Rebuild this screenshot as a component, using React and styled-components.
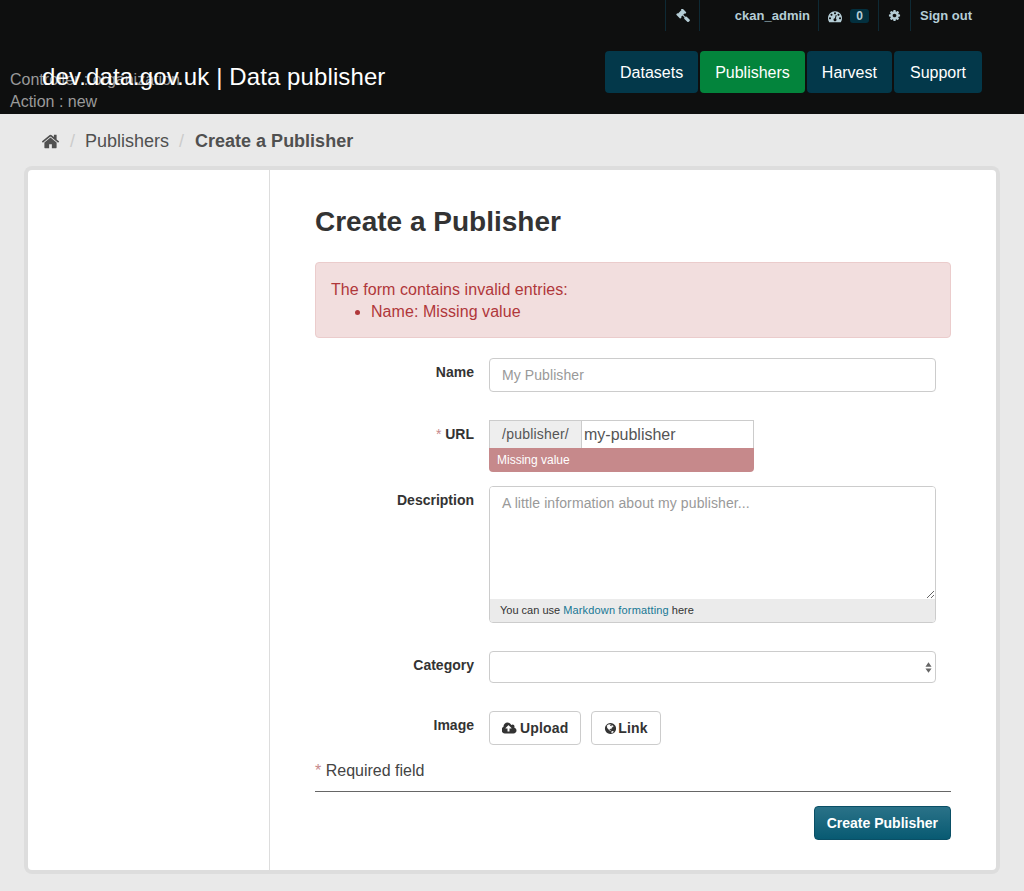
import styled, { createGlobalStyle } from "styled-components";

// Font Awesome 4 glyphs, the library's own icons differ from the old set
const icons = {
  gavel: {
    box: "0 0 1792 1792",
    d: "M1771 1440q0 53-37 90l-107 108q-39 37-91 37-53 0-90-37l-363-364q-38-36-38-90 0-53 43-96l-256-256-126 126q-14 14-34 14t-34-14q2 2 12.5 12t12.5 13 10 11.5 10 13.5 6 13.5 5.5 16.5 1.5 18q0 38-28 68-3 3-16.5 18t-19 20.5-18.5 16.5-22 15.5-22 9-26 4.5q-40 0-68-28l-408-408q-28-28-28-68 0-13 4.5-26t9-22 15.5-22 16.5-18.5 20.5-19 18-16.5q30-28 68-28 10 0 18 1.5t16.5 5.5 13.5 6 13.5 10 11.5 10 13 12.5 12 12.5q-14-14-14-34t14-34l348-348q14-14 34-14t34 14q-2-2-12.5-12t-12.5-13-10-11.5-10-13.5-6-13.5-5.5-16.5-1.5-18q0-38 28-68 3-3 16.5-18t19-20.5 18.5-16.5 22-15.5 22-9 26-4.5q40 0 68 28l408 408q28 28 28 68 0 13-4.5 26t-9 22-15.5 22-16.5 18.5-20.5 19-18 16.5q-30 28-68 28-10 0-18-1.5t-16.5-5.5-13.5-6-13.5-10-11.5-10-13-12.5-12-12.5q14 14 14 34t-14 34l-126 126 256 256q43-43 96-43 52 0 91 37l363 363q37 39 37 91z",
  },
  dashboard: {
    box: "0 0 1792 1792",
    d: "M384 1184q0-53-37.5-90.5t-90.5-37.5-90.5 37.5-37.5 90.5 37.5 90.5 90.5 37.5 90.5-37.5 37.5-90.5zm192-448q0-53-37.5-90.5t-90.5-37.5-90.5 37.5-37.5 90.5 37.5 90.5 90.5 37.5 90.5-37.5 37.5-90.5zm428 481l101-382q6-26-7.5-48.5t-38.5-29.5-48 6.5-30 39.5l-101 382q-60 5-107 43.5t-63 98.5q-20 77 20 146t117 89 146-20 89-117q16-60-6-117t-72-91zm660-33q0-53-37.5-90.5t-90.5-37.5-90.5 37.5-37.5 90.5 37.5 90.5 90.5 37.5 90.5-37.5 37.5-90.5zm-640-640q0-53-37.5-90.5t-90.5-37.5-90.5 37.5-37.5 90.5 37.5 90.5 90.5 37.5 90.5-37.5 37.5-90.5zm448 192q0-53-37.5-90.5t-90.5-37.5-90.5 37.5-37.5 90.5 37.5 90.5 90.5 37.5 90.5-37.5 37.5-90.5zm320 448q0 261-141 483-19 29-54 29h-1402q-35 0-54-29-141-221-141-483 0-182 71-348t191-286 286-191 348-71 348 71 286 191 191 286 71 348z",
  },
  cog: {
    box: "0 0 1792 1792",
    d: "M1152 896q0-106-75-181t-181-75-181 75-75 181 75 181 181 75 181-75 75-181zm512-109v222q0 12-8 23t-20 13l-185 28q-19 54-39 91 35 50 107 138 10 12 10 25t-9 23q-27 37-99 108t-94 71q-12 0-26-9l-138-108q-44 23-91 38-16 136-29 186-7 28-36 28h-222q-14 0-24.5-8.5t-11.5-21.5l-28-184q-49-16-90-37l-141 107q-10 9-25 9-14 0-25-11-126-114-165-168-7-10-7-23 0-12 8-23 15-21 51-66.5t54-70.5q-27-50-41-99l-183-27q-13-2-21-12.5t-8-23.5v-222q0-12 8-23t19-13l186-28q14-46 39-92-40-57-107-138-10-12-10-24 0-10 9-23 26-36 98.5-107.5t94.5-71.5q13 0 26 10l138 107q44-23 91-38 16-136 29-186 7-28 36-28h222q14 0 24.5 8.5t11.5 21.5l28 184q49 16 90 37l142-107q9-9 24-9 13 0 25 10 129 119 165 170 7 8 7 22 0 12-8 23-15 21-51 66.5t-54 70.5q26 50 41 98l183 28q13 2 21 12.5t8 23.5z",
  },
  home: {
    box: "0 0 1792 1792",
    d: "M1472 992v480q0 26-19 45t-45 19h-384v-384h-256v384h-384q-26 0-45-19t-19-45v-480q0-1 .5-3t.5-3l575-474 575 474q1 2 1 6zm223-69l-62 74q-8 9-21 11h-3q-13 0-21-7l-692-577-692 577q-12 8-24 7-13-2-21-11l-62-74q-8-10-7-23.5t11-21.5l719-599q32-26 76-26t76 26l244 204v-195q0-14 9-23t23-9h192q14 0 23 9t9 23v408l219 182q10 8 11 21.5t-7 23.5z",
  },
  upload: {
    box: "0 0 1920 1792",
    d: "M1216 864q0-14-9-23l-352-352q-9-9-23-9t-23 9l-351 351q-10 12-10 24 0 14 9 23t23 9h224v352q0 13 9.5 22.5t22.5 9.5h192q13 0 22.5-9.5t9.5-22.5v-352h224q13 0 22.5-9.5t9.5-22.5zm640 288q0 159-112.5 271.5t-271.5 112.5h-1088q-185 0-316.5-131.5t-131.5-316.5q0-130 70-240t188-165q-2-30-2-43 0-212 150-362t362-150q156 0 285.5 87t188.5 231q71-62 166-62 106 0 181 75t75 181q0 76-41 138 130 31 213.5 135.5t83.5 238.5z",
  },
  globe: {
    box: "0 0 1792 1792",
    d: "M896 128q209 0 385.5 103t279.5 279.5 103 385.5-103 385.5-279.5 279.5-385.5 103-385.5-103-279.5-279.5-103-385.5 103-385.5 279.5-279.5 385.5-103zm274 521q-2 1-9.5 9.5t-13.5 9.5q2 0 4.5-5t5-11 3.5-7q6-7 22-15 14-6 52-12 34-8 51 11-2-2 9.5-13t14.5-12q3-2 15-4.5t15-7.5l2-22q-12 1-17.5-7t-6.5-21q0 2-6 8 0-7-4.5-8t-11.5 1-9 1q-10-3-15-7.5t-8-16.5-4-15q-2-5-9.5-11t-9.5-10q-1-2-2.5-5.5t-3-6.5-4-5.5-5.5-2.5-7 5-7.5 10-4.5 5q-3-2-6-1.5t-4.5 1-4.5 3-5 3.5q-3 2-8.5 3t-8.5 2q15-5-1-11-10-4-16-3 9-4 7.5-12t-8.5-14h5q-1-4-8.5-8.5t-17.5-8.5-13-6q-8-5-34-9.5t-33-.5q-5 6-4.5 10.5t4 14 3.5 12.5q1 6-5.5 13t-6.5 12q0 7 14 15.5t10 21.5q-3 8-16 16t-16 12q-5 8-1.5 18.5t10.5 16.5q2 2 1.5 4t-3.5 4.5-5.5 4-6.5 3.5l-3 2q-11 5-20.5-6t-13.5-26q-7-25-16-30-23-8-29 1-5-13-41-26-25-9-58-4 6-1 0-15-7-15-19-12 3-6 4-17.5t1-13.5q3-13 12-23 1-1 7-8.5t9.5-13.5.5-6q35 4 50-11 5-5 11.5-17t10.5-17q9-6 14-5.5t14.5 5.5 14.5 5q14 1 15.5-11t-7.5-20q12 1 3-17-5-7-8-9-12-4-27 5-8 4 2 8-1-1-9.5 10.5t-16.5 17.5-16-5q-1-1-5.5-13.5t-9.5-13.5q-8 0-16 15 3-8-11-15t-24-8q19-12-8-27-7-4-20.5-5t-19.5 4q-5 7-5.5 11.5t5 8 10.5 5.5 11.5 4 8.5 3q14 10 8 14-2 1-8.5 3.5t-11.5 4.5-6 4q-3 4 0 14t-2 14q-5-5-9-17.5t-7-16.5q7 9-25 6l-10-1q-4 0-16 2t-20.5 1-13.5-8q-4-8 0-20 1-4 4-2-4-3-11-9.5t-10-8.5q-46 15-94 41 6 1 12-1 5-2 13-6.5t10-5.5q34-14 42-7l5-5q14 16 20 25-7-4-30-1-20 6-22 12 7 12 5 18-4-3-11.5-10t-14.5-11-15-5q-16 0-22 1-146 80-235 222 7 7 12 8 4 1 5 9t2.5 11 11.5-3q9 8 3 19 1-1 44 27 19 17 21 21 3 11-10 18-1-2-9-9t-9-4q-3 5 .5 18.5t10.5 12.5q-7 0-9.5 16t-2.5 35.5-1 23.5l2 1q-3 12 5.5 34.5t21.5 19.5q-13 3 20 43 6 8 8 9 3 2 12 7.5t15 10 10 10.5q4 5 10 22.5t14 23.5q-2 6 9.5 20t10.5 23q-1 0-2.5 1t-2.5 1q3 7 15.5 14t15.5 13q1 3 2 10t3 11 8 2q2-20-24-62-15-25-17-29-3-5-5.5-15.5t-4.5-14.5q2 0 6 1.5t8.5 3.5 7.5 4 2 3q-3 7 2 17.5t12 18.5 17 19 12 13q6 6 14 19.5t0 13.5q9 0 20 10.5t17 19.5q5 8 8 26t5 24q2 7 8.5 13.5t12.5 9.5l16 8 13 7q5 2 18.5 10.5t21.5 11.5q10 4 16 4t14.5-2.5 13.5-3.5q15-2 29 15t21 21q36 19 55 11-2 1 .5 7.5t8 15.5 9 14.5 5.5 8.5q5 6 18 15t18 15q6-4 7-9-3 8 7 20t18 10q14-3 14-32-31 15-49-18 0-1-2.5-5.5t-4-8.5-2.5-8.5 0-7.5 5-3q9 0 10-3.5t-2-12.5-4-13q-1-8-11-20t-12-15q-5 9-16 8t-16-9q0 1-1.5 5.5t-1.5 6.5q-13 0-15-1 1-3 2.5-17.5t3.5-22.5q1-4 5.5-12t7.5-14.5 4-12.5-4.5-9.5-17.5-2.5q-19 1-26 20-1 3-3 10.5t-5 11.5-9 7q-7 3-24 2t-24-5q-13-8-22.5-29t-9.5-37q0-10 2.5-26.5t3-25-5.5-24.5q3-2 9-9.5t10-10.5q2-1 4.5-1.5t4.5 0 4-1.5 3-6q-1-1-4-3-3-3-4-3 7 3 28.5-1.5t27.5 1.5q15 11 22-2 0-1-2.5-9.5t-.5-13.5q5 27 29 9 3 3 15.5 5t17.5 5q3 2 7 5.5t5.5 4.5 5-.5 8.5-6.5q10 14 12 24 11 40 19 44 7 3 11 2t4.5-9.5 0-14-1.5-12.5l-1-8v-18l-1-8q-15-3-18.5-12t1.5-18.5 15-18.5q1-1 8-3.5t15.5-6.5 12.5-8q21-19 15-35 7 0 11-9-1 0-5-3t-7.5-5-4.5-2q9-5 2-16 5-3 7.5-11t7.5-10q9 12 21 2 8-8 1-16 5-7 20.5-10.5t18.5-9.5q7 2 8-2t1-12 3-12q4-5 15-9t13-5l17-11q3-4 0-4 18 2 31-11 10-11-6-20 3-6-3-9.5t-15-5.5q3-1 11.5-.5t10.5-1.5q15-10-7-16-17-5-43 12zm-163 877q206-36 351-189-3-3-12.5-4.5t-12.5-3.5q-18-7-24-8 1-7-2.5-13t-8-9-12.5-8-11-7q-2-2-7-6t-7-5.5-7.5-4.5-8.5-2-10 1l-3 1q-3 1-5.5 2.5t-5.5 3-4 3 0 2.5q-21-17-36-22-5-1-11-5.5t-10.5-7-10-1.5-11.5 7q-5 5-6 15t-2 13q-7-5 0-17.5t2-18.5q-3-6-10.5-4.5t-12 4.5-11.5 8.5-9 6.5-8.5 5.5-8.5 7.5q-3 4-6 12t-5 11q-2-4-11.5-6.5t-9.5-5.5q2 10 4 35t5 38q7 31-12 48-27 25-29 40-4 22 12 26 0 7-8 20.5t-7 21.5q0 6 2 16z",
  },
};

const Icon = ({ name, size }) => (
  <svg width={size} height={size} viewBox={icons[name].box} fill="currentColor">
    <path d={icons[name].d} />
  </svg>
);

const navItems = [
  { label: "Datasets" },
  { label: "Publishers", active: true },
  { label: "Harvest" },
  { label: "Support" },
];

const App = () => {
  return (
    <>
      <GlobalStyle />
      <Masthead>
        <AccountBar>
          <AccountItem $width={34}>
            <Icon name="gavel" size={14} />
          </AccountItem>
          <UserName>ckan_admin</UserName>
          <AccountItem $width={60}>
            <Icon name="dashboard" size={14} />
            <Badge>0</Badge>
          </AccountItem>
          <AccountItem $width={32}>
            <Icon name="cog" size={13} />
          </AccountItem>
          <SignOut>Sign out</SignOut>
        </AccountBar>
        <MastheadRow>
          <Logo>dev.data.gov.uk | Data publisher</Logo>
          <Nav>
            {navItems.map((item) => (
              <NavLink key={item.label} $active={item.active}>
                {item.label}
              </NavLink>
            ))}
          </Nav>
        </MastheadRow>
        <DebugInfo>
          <div>Controller : organization</div>
          <div>Action : new</div>
        </DebugInfo>
      </Masthead>
      <Main>
        <Breadcrumb>
          <Icon name="home" size={19} />
          <Divider>/</Divider>
          <span>Publishers</span>
          <Divider>/</Divider>
          <strong>Create a Publisher</strong>
        </Breadcrumb>
        <Wrapper>
          <Sidebar />
          <Primary>
            <Title>Create a Publisher</Title>
            <Alert>
              The form contains invalid entries:
              <AlertList>
                <li>Name: Missing value</li>
              </AlertList>
            </Alert>
            <FormRow $mb={28}>
              <Label>Name</Label>
              <TextInput placeholder="My Publisher" readOnly />
            </FormRow>
            <FormRow $mb={14}>
              <Label>
                <Required>*</Required> URL
              </Label>
              <SlugField>
                <SlugInputRow>
                  <SlugPrefix>/publisher/</SlugPrefix>
                  <SlugValue>my-publisher</SlugValue>
                </SlugInputRow>
                <FieldError>Missing value</FieldError>
              </SlugField>
            </FormRow>
            <FormRow $mb={28}>
              <Label>Description</Label>
              <EditorBox>
                <TextArea placeholder="A little information about my publisher..." readOnly />
                <EditorInfo>
                  You can use <a href="#markdown">Markdown formatting</a> here
                </EditorInfo>
              </EditorBox>
            </FormRow>
            <FormRow $mb={28}>
              <Label>Category</Label>
              <SelectBox>
                <svg width="7" height="13" viewBox="0 0 8 14">
                  <path d="M4 1 L7.5 6 L0.5 6 Z M4 13 L0.5 8 L7.5 8 Z" fill="#666" />
                </svg>
              </SelectBox>
            </FormRow>
            <FormRow $mb={15}>
              <Label>Image</Label>
              <ImageButtons>
                <ImageButton $gap={3}>
                  <Icon name="upload" size={15} />
                  Upload
                </ImageButton>
                <ImageButton $gap={1}>
                  <Icon name="globe" size={13} />
                  Link
                </ImageButton>
              </ImageButtons>
            </FormRow>
            <RequiredNote>
              <Required>*</Required> Required field
            </RequiredNote>
            <FormActions>
              <PrimaryButton>Create Publisher</PrimaryButton>
            </FormActions>
          </Primary>
        </Wrapper>
      </Main>
    </>
  );
};

const GlobalStyle = createGlobalStyle`
  html, body {
    margin: 0;
    background: #e9e9e9;
  }

  body {
    font-family: "Liberation Sans", Arial, sans-serif;
    font-size: 14px;
    color: #444;
  }

  * {
    box-sizing: border-box;
  }
`;

const Masthead = styled.header`
  position: relative;
  height: 114px;
  background: #0e0f0f;
  color: #fff;
`;

const AccountBar = styled.div`
  display: flex;
  justify-content: flex-end;
  height: 31px;
  padding-right: 42px;
  color: #b5cdd6;
  font-size: 13px;
  font-weight: 700;
`;

const AccountItem = styled.div`
  display: flex;
  align-items: center;
  justify-content: center;
  gap: 8px;
  width: ${({ $width }) => $width}px;
  border-left: 1px solid #0e2a35;
`;

const UserName = styled.div`
  display: flex;
  align-items: center;
  justify-content: flex-end;
  width: 119px;
  padding-right: 8px;
  border-left: 1px solid #0e2a35;
`;

const SignOut = styled.div`
  display: flex;
  align-items: center;
  width: 72px;
  padding-left: 9px;
  border-left: 1px solid #0e2a35;
`;

const Badge = styled.span`
  padding: 1px 6px;
  border-radius: 3px;
  background: #03303f;
  font-size: 12px;
  line-height: 12px;
`;

const MastheadRow = styled.div`
  display: flex;
  justify-content: space-between;
  padding: 20px 42px 0;
`;

const Logo = styled.div`
  position: relative;
  z-index: 1;
  padding-top: 10px;
  font-size: 24px;
  letter-spacing: 0.1px;
  line-height: 32px;
`;

const Nav = styled.nav`
  display: flex;
  gap: 2px;
`;

const NavLink = styled.a`
  height: 42px;
  padding: 0 15px;
  border-radius: 4px;
  background: ${({ $active }) => ($active ? "#03843c" : "#03384a")};
  font-size: 16px;
  line-height: 43px;

  &:last-child {
    padding: 0 16px;
  }
`;

const DebugInfo = styled.div`
  position: absolute;
  left: 10px;
  top: 69px;
  color: #9a9a9a;
  font-size: 16px;
  line-height: 22px;
`;

const Main = styled.main`
  height: 777px;
  padding: 0 28px;
`;

const Breadcrumb = styled.div`
  display: flex;
  align-items: center;
  height: 52px;
  padding: 3px 0 0 14px;
  color: #505050;
  font-size: 18px;

  svg {
    margin-left: -1px;
  }

  strong {
    margin-left: 1px;
    font-weight: 700;
  }
`;

const Divider = styled.span`
  margin: 0 10px;
  color: #ccc;
`;

const Wrapper = styled.div`
  display: flex;
  height: 700px;
  margin-top: 4px;
  border-radius: 4px;
  background: #fff;
  box-shadow: 0 0 0 4px rgba(0, 0, 0, 0.05);
`;

const Sidebar = styled.aside`
  width: 242px;
  border-right: 1px solid #ddd;
`;

const Primary = styled.section`
  flex: 1;
  padding: 34px 45px 0 45px;
`;

const Title = styled.h1`
  margin: 0 0 23px;
  color: #333;
  font-size: 28px;
  font-weight: 700;
  line-height: 35px;
`;

const Alert = styled.div`
  height: 76px;
  margin-bottom: 20px;
  padding: 16px 15px 0;
  border: 1px solid #ebcccc;
  border-radius: 4px;
  background: #f2dede;
  color: #b0373a;
  font-size: 16px;
  letter-spacing: 0.06px;
  line-height: 22px;
`;

const AlertList = styled.ul`
  margin: 0;
  padding-left: 40px;
`;

const FormRow = styled.div`
  display: grid;
  grid-template-columns: 159px 447px;
  column-gap: 15px;
  margin-bottom: ${({ $mb }) => $mb}px;
`;

const Label = styled.label`
  padding-top: 5px;
  color: #333;
  font-size: 14px;
  font-weight: 700;
  line-height: 18px;
  text-align: right;
`;

const Required = styled.span`
  color: #c6898b;
  font-weight: 400;
`;

const TextInput = styled.input`
  width: 100%;
  height: 34px;
  padding: 0 12px;
  border: 1px solid #ccc;
  border-radius: 4px;
  font-family: inherit;
  font-size: 14px;
  letter-spacing: 0.08px;

  &::placeholder {
    color: #999;
  }
`;

const SlugField = styled.div`
  width: 265px;
`;

const SlugInputRow = styled.div`
  display: flex;
  height: 28px;
  border: 1px solid #ccc;
  border-bottom: 0;
  color: #555;
`;

const SlugPrefix = styled.div`
  width: 92px;
  border-right: 1px solid #ccc;
  background: #eee;
  font-size: 14px;
  letter-spacing: 0.2px;
  line-height: 27px;
  text-align: center;
`;

const SlugValue = styled.div`
  padding-left: 2px;
  font-size: 16px;
  line-height: 28px;
`;

const FieldError = styled.div`
  height: 24px;
  padding-left: 8px;
  border-radius: 0 0 4px 4px;
  background: #c6898b;
  color: #fff;
  font-size: 12px;
  line-height: 24px;
`;

const EditorBox = styled.div`
  display: flex;
  flex-direction: column;
  height: 137px;
  border: 1px solid #ccc;
  border-radius: 4px;
  overflow: hidden;
`;

const TextArea = styled.textarea`
  flex: 1;
  padding: 6px 12px;
  border: 0;
  outline: 0;
  font-family: inherit;
  font-size: 14px;
  letter-spacing: 0.1px;
  line-height: 20px;
  resize: vertical;

  &::placeholder {
    color: #999;
  }
`;

const EditorInfo = styled.div`
  height: 23px;
  padding-left: 10px;
  background: #ebebeb;
  color: #333;
  font-size: 11px;
  line-height: 22px;

  a {
    color: #187794;
    letter-spacing: 0.15px;
    text-decoration: none;
  }
`;

const SelectBox = styled.div`
  display: flex;
  align-items: center;
  justify-content: flex-end;
  height: 32px;
  padding-right: 3px;
  border: 1px solid #ccc;
  border-radius: 4px;
`;

const ImageButtons = styled.div`
  display: flex;
  gap: 10px;
`;

const ImageButton = styled.button`
  display: flex;
  align-items: center;
  gap: ${({ $gap }) => $gap}px;
  height: 34px;
  padding: 0 12px;
  border: 1px solid #ccc;
  border-radius: 4px;
  background: #fff;
  color: #333;
  font-family: inherit;
  font-size: 14px;
  font-weight: 700;
  letter-spacing: 0.15px;
`;

const RequiredNote = styled.div`
  padding: 1px 0 10px;
  border-bottom: 1px solid #666;
  color: #444;
  font-size: 16px;
  line-height: 20px;
`;

const FormActions = styled.div`
  display: flex;
  justify-content: flex-end;
  margin-top: 14px;
`;

const PrimaryButton = styled.button`
  height: 34px;
  padding: 0 12px;
  border: 1px solid #0a4f66;
  border-radius: 4px;
  background: linear-gradient(#2a7288, #085a72);
  color: #fff;
  font-family: inherit;
  font-size: 14px;
  font-weight: 700;
`;

export default App;
